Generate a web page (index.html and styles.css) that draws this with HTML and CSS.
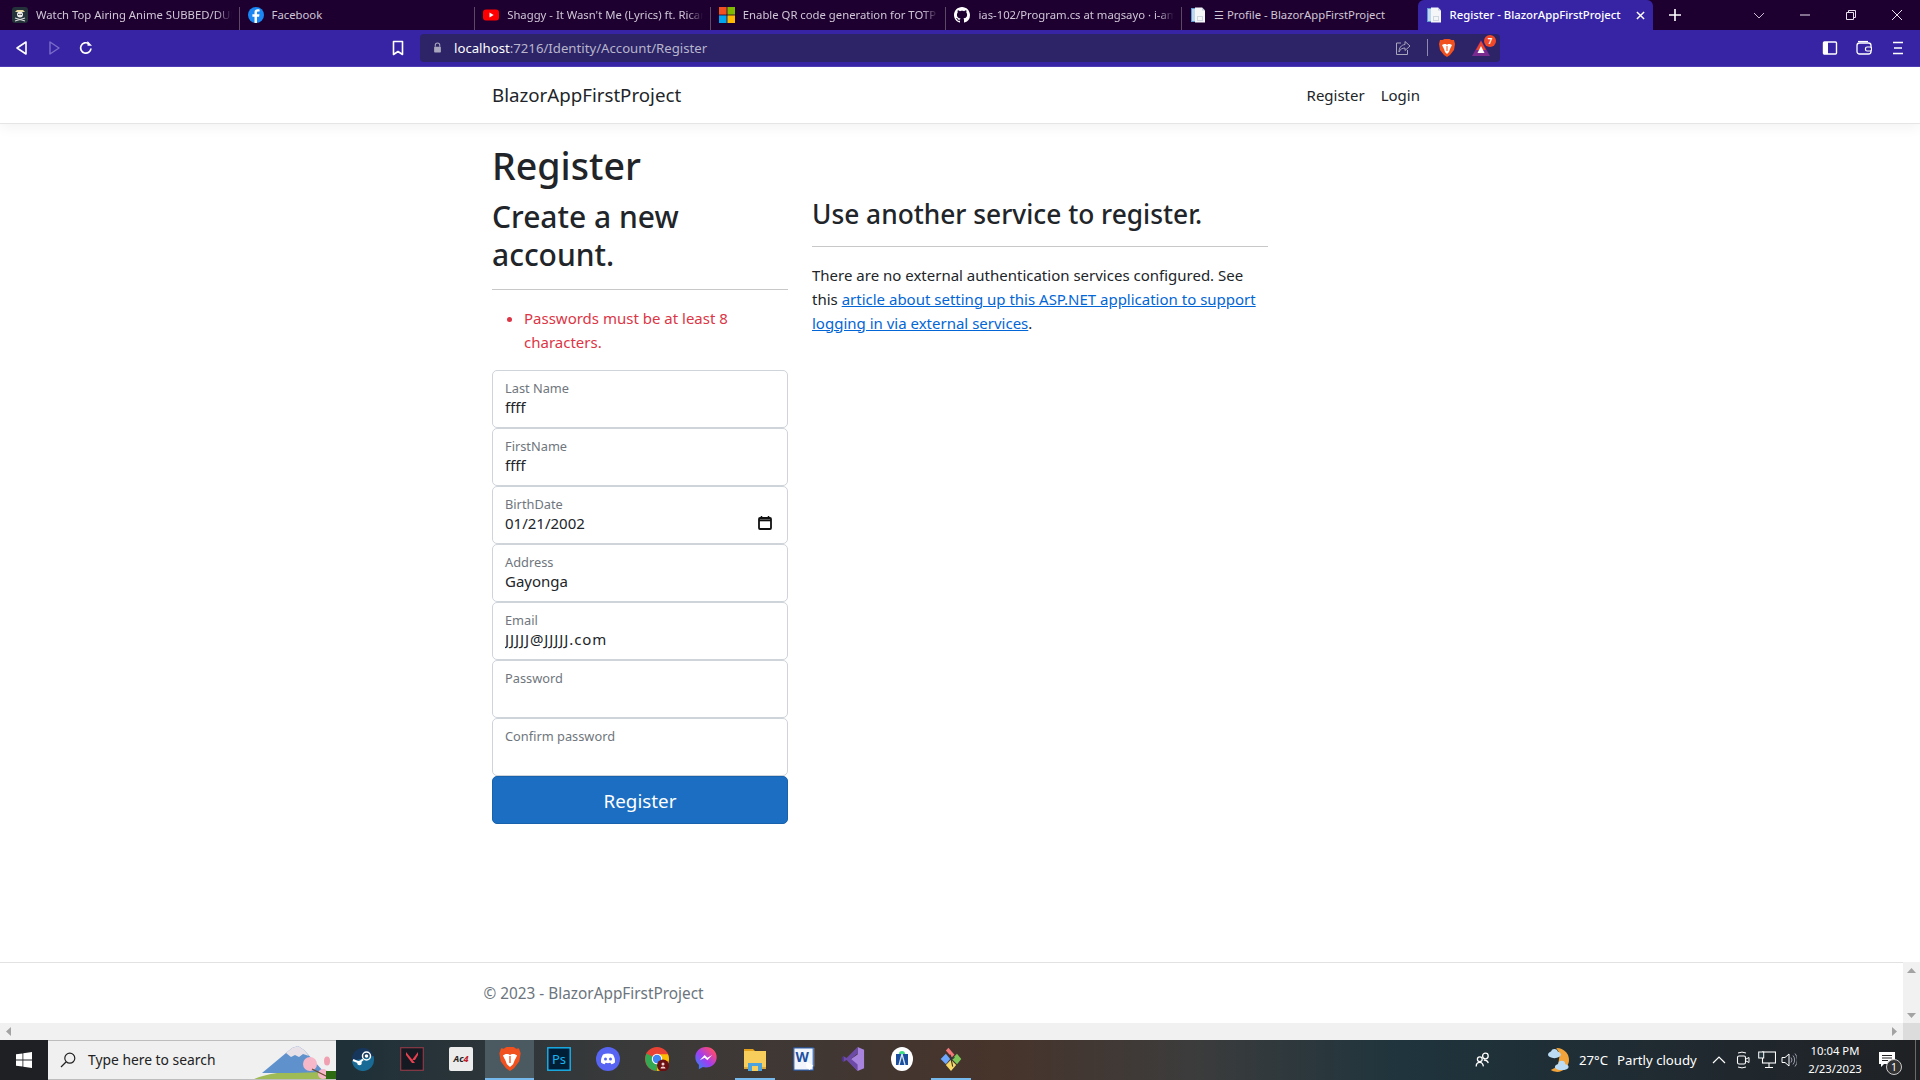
FILE: index.html
```html
<!DOCTYPE html>
<html lang="en">
<head>
<meta charset="utf-8">
<title>Register - BlazorAppFirstProject</title>
<link rel="stylesheet" href="styles.css">
</head>
<body>
<svg class="defs" width="0" height="0" aria-hidden="true">
  <symbol id="doc" viewBox="0 0 16 16">
    <path d="M1 1h6v14H1z" fill="#5f9bd1"/><path d="M2 2h4v12H2z" fill="#bcd8f0"/>
    <path d="M5 0.5h7l3 3v12H5z" fill="#f4f6f8"/><path d="M12 .5v3h3z" fill="#c6d0d8"/>
    <path d="M7 9h6v5H7z" fill="#cfd8e0"/><path d="M8 10h4v3H8z" fill="#f4f6f8"/>
  </symbol>
</svg>

<div class="tabbar">
  <div class="tab">
    <svg class="fav" viewBox="0 0 16 16"><rect width="16" height="16" rx="3" fill="#24323a"/><path d="M3 5l10 0-2-2H5z" fill="#e8d9a0"/><circle cx="8" cy="7.6" r="3" fill="#eee"/><path d="M3 11l10 3M13 11L3 14" stroke="#ddd" stroke-width="1.2"/><circle cx="6.9" cy="7.4" r=".7" fill="#222"/><circle cx="9.1" cy="7.4" r=".7" fill="#222"/></svg>
    <span class="tab-title tab-fade">Watch Top Airing Anime SUBBED/DUB</span>
  </div>
  <div class="tab">
    <svg class="fav" viewBox="0 0 16 16"><circle cx="8" cy="8" r="8" fill="#1b87f3"/><path d="M9 16V9.8h2.1l.4-2.5H9V5.8c0-.8.3-1.2 1.3-1.2h1.3V2.4c-.5-.1-1.2-.2-1.9-.2-2 0-3.2 1.2-3.2 3.3v1.8H4.400v2.500h2.100V16z" fill="#fff"/></svg>
    <span class="tab-title">Facebook</span>
  </div>
  <div class="tab">
    <svg class="fav" viewBox="0 0 16 16"><rect y="2.500" width="16" height="11" rx="3" fill="#f00"/><path d="M6.500 5.500v5L10.700 8z" fill="#fff"/></svg>
    <span class="tab-title tab-fade">Shaggy - It Wasn't Me (Lyrics) ft. Ricar</span>
  </div>
  <div class="tab">
    <svg class="fav" viewBox="0 0 16 16"><path d="M0 0h7.600v7.600H0z" fill="#f25022"/><path d="M8.400 0H16v7.600H8.400z" fill="#7fba00"/><path d="M0 8.400h7.600V16H0z" fill="#00a4ef"/><path d="M8.400 8.400H16V16H8.400z" fill="#ffb900"/></svg>
    <span class="tab-title tab-fade">Enable QR code generation for TOTP a</span>
  </div>
  <div class="tab">
    <svg class="fav" viewBox="0 0 16 16"><path fill="#fff" d="M8 0C3.580 0 0 3.580 0 8c0 3.540 2.290 6.530 5.470 7.590.4.070.55-.17.55-.38 0-.19-.01-.82-.01-1.490-2.010.37-2.530-.49-2.690-.94-.09-.23-.48-.94-.82-1.130-.28-.15-.68-.52-.01-.53.63-.01 1.080.58 1.230.82.720 1.210 1.870.87 2.330.66.070-.52.28-.87.51-1.070-1.780-.2-3.640-.89-3.640-3.950 0-.87.31-1.590.82-2.150-.08-.2-.36-1.020.08-2.120 0 0 .67-.21 2.200.82.64-.18 1.320-.27 2-.27.68 0 1.360.09 2 .27 1.530-1.040 2.200-.82 2.200-.82.44 1.100.16 1.920.08 2.120.51.56.82 1.270.82 2.150 0 3.070-1.870 3.750-3.650 3.950.29.25.54.73.54 1.480 0 1.070-.01 1.930-.01 2.200 0 .21.15.46.55.38A8.013 8.013 0 0016 8c0-4.420-3.580-8-8-8z"/></svg>
    <span class="tab-title tab-fade">ias-102/Program.cs at magsayo · i-am</span>
  </div>
  <div class="tab tab-last">
    <svg class="fav"><use href="#doc"/></svg>
    <span class="tab-title">☰ Profile - BlazorAppFirstProject</span>
  </div>
  <div class="tab tab-active">
    <svg class="fav"><use href="#doc"/></svg>
    <span class="tab-title">Register - BlazorAppFirstProject</span>
    <svg class="tab-close" viewBox="0 0 10 10"><path d="M1 1l8 8M9 1L1 9" stroke="#fff" stroke-width="1.600"/></svg>
  </div>
  <svg class="new-tab" viewBox="0 0 12 12"><path d="M6 0v12M0 6h12" stroke="#fff" stroke-width="1.600"/></svg>
  <div class="win-controls">
    <svg class="win-ico" viewBox="0 0 12 12"><path d="M1 4l5 5 5-5" fill="none" stroke="#c9bdd0" stroke-width="1"/></svg>
    <svg class="win-ico" viewBox="0 0 12 12"><path d="M1 6h10" stroke="#e8e0ec" stroke-width="1"/></svg>
    <svg class="win-ico" viewBox="0 0 12 12"><path d="M1.500 3.500h7v7h-7zM3.500 3.500v-2h7v7h-2" fill="none" stroke="#e8e0ec" stroke-width="1"/></svg>
    <svg class="win-ico" viewBox="0 0 12 12"><path d="M1 1l10 10M11 1L1 11" stroke="#e8e0ec" stroke-width="1"/></svg>
  </div>
</div>

<div class="toolbar">
  <svg class="tool-ico tool-back" viewBox="0 0 16 16"><path d="M12 2v12L3 8z" fill="none" stroke="#fff" stroke-width="1.600" stroke-linejoin="round"/></svg>
  <svg class="tool-ico tool-fwd" viewBox="0 0 16 16"><path d="M4 2v12l9-6z" fill="none" stroke="#7a6cc8" stroke-width="1.400" stroke-linejoin="round"/></svg>
  <svg class="tool-ico tool-reload" viewBox="0 0 16 16"><path d="M13 8.500A5.200 5.200 0 1 1 10.800 3.700" fill="none" stroke="#fff" stroke-width="1.700"/><path d="M9.500 1v4.800h4.500z" fill="#fff"/></svg>
  <svg class="tool-ico tool-mark" viewBox="0 0 16 16"><path d="M3.500 1.500h9v13L8 11.500l-4.500 3z" fill="none" stroke="#fff" stroke-width="1.600" stroke-linejoin="round"/></svg>
  <div class="urlbar">
    <svg class="lock" viewBox="0 0 12 14"><path d="M3 6V4a3 3 0 0 1 6 0v2" fill="none" stroke="#a8a6bd" stroke-width="1.400"/><rect x="1.500" y="6" width="9" height="7.500" rx="1" fill="#a8a6bd"/></svg>
    <span class="url"><b class="url-host">localhost</b>:7216/Identity/Account/Register</span>
    <svg class="share" viewBox="0 0 16 16"><path d="M6 3H1.500v11.500h11V10" fill="none" stroke="#a8a6bd" stroke-width="1"/><path d="M10 1.500L15 6l-5 4.500V8C7 8 5 9.500 4 12c0-4 2-7 6-7.500z" fill="none" stroke="#a8a6bd" stroke-width="1"/></svg>
    <span class="url-sep"></span>
    <svg class="brave" viewBox="0 0 16 18"><path d="M3.500 1L5.500 0h5l2 1L15 1l1 4-1 6-4 5-3 2-3-2-4-5-1-6 1-4z" fill="#f1501f"/><path d="M5 5h2l1 1 1-1h2l2 1-2 4-1 3-2 2-2-2-1-3-2-4z" fill="#fff"/><path d="M8 7v5" stroke="#f1501f" stroke-width="1"/></svg>
    <span class="rewards">
      <svg class="rewards-tri" viewBox="0 0 18 16"><path d="M9 0l9 16H0z" fill="#7b2a8f"/><path d="M9 1l5 9H4z" fill="#e8452c"/><path d="M9 6l3.500 7h-7z" fill="#fff"/></svg>
      <span class="badge">7</span>
    </span>
  </div>
  <svg class="tool-ico tool-side" viewBox="0 0 16 16"><rect x="1.500" y="2" width="13" height="12" rx="1" fill="none" stroke="#fff" stroke-width="1.400"/><rect x="1.500" y="2" width="4.500" height="12" fill="#fff"/></svg>
  <svg class="tool-ico tool-wallet" viewBox="0 0 16 16"><rect x="1" y="3" width="14" height="11" rx="2.500" fill="none" stroke="#fff" stroke-width="1.300"/><path d="M2 1.500h10" stroke="#fff" stroke-width="1.200"/><rect x="9.500" y="7" width="6" height="4" rx="1.500" fill="#3624a5" stroke="#fff" stroke-width="1.200"/></svg>
  <svg class="tool-ico tool-menu" viewBox="0 0 16 16"><path d="M3 2.500h10M4 8h8M3 13.500h10" stroke="#fff" stroke-width="1.500"/></svg>
</div>

<div class="page">
  <header class="navbar">
    <div class="container nav-inner">
      <a class="brand">BlazorAppFirstProject</a>
      <nav class="nav-links"><a>Register</a><a>Login</a></nav>
    </div>
  </header>
  <main class="container main">
    <h1>Register</h1>
    <div class="cols">
      <section class="col-form">
        <h2>Create a new account.</h2>
        <hr>
        <ul class="errors"><li>Passwords must be at least 8 characters.</li></ul>
        <div class="field"><input type="text" value="ffff"><label>Last Name</label></div>
        <div class="field"><input type="text" value="ffff"><label>FirstName</label></div>
        <div class="field"><input type="text" value="01/21/2002"><label>BirthDate</label>
          <svg class="cal" viewBox="0 0 14 14"><path d="M3.500 0v3M10.500 0v3" stroke="#111" stroke-width="1.500"/><rect x="1" y="2" width="12" height="11" rx="1" fill="none" stroke="#111" stroke-width="1.800"/><path d="M1 4.300h12" stroke="#111" stroke-width="2"/></svg>
        </div>
        <div class="field"><input type="text" value="Gayonga"><label>Address</label></div>
        <div class="field"><input class="input-wide" type="text" value="JJJJJ@JJJJJ.com"><label>Email</label></div>
        <div class="field"><input type="password"><label>Password</label></div>
        <div class="field"><input type="password"><label>Confirm password</label></div>
        <button class="submit" type="button">Register</button>
      </section>
      <section class="col-ext">
        <h3>Use another service to register.</h3>
        <hr>
        <p>There are no external authentication services configured. See this <a href="#">article about setting up this ASP.NET application to support logging in via external services</a>.</p>
      </section>
    </div>
  </main>
</div>

<div class="footer-wrap">
  <div class="footer-row">
    <footer class="footer"><div class="footer-inner">© 2023 - <a>BlazorAppFirstProject</a></div></footer>
    <div class="vscroll">
      <svg class="arrow" viewBox="0 0 9 5"><path d="M4.500 0L9 5H0z" fill="#a3a3a3"/></svg>
      <svg class="arrow" viewBox="0 0 9 5"><path d="M4.500 5L0 0h9z" fill="#a3a3a3"/></svg>
    </div>
  </div>
  <div class="hscroll">
    <div class="hscroll-track">
      <svg class="arrow-h" viewBox="0 0 5 9"><path d="M0 4.500L5 0v9z" fill="#a3a3a3"/></svg>
      <svg class="arrow-h" viewBox="0 0 5 9"><path d="M5 4.500L0 0v9z" fill="#a3a3a3"/></svg>
    </div>
    <div class="hscroll-corner"></div>
  </div>
</div>

<div class="taskbar">
  <div class="start">
    <svg class="start-ico" viewBox="0 0 16 16"><path d="M0 2.300l6.500-.9v6.200H0zM7.300 1.300L16 0v7.600H7.300zM0 8.400h6.500v6.200L0 13.700zM7.300 8.400H16V16l-8.700-1.300z" fill="#fff"/></svg>
  </div>
  <div class="search">
    <svg class="search-ico" viewBox="0 0 16 16"><circle cx="9.800" cy="6.200" r="5" fill="none" stroke="#222" stroke-width="1.200"/><path d="M6 10L1 15" stroke="#222" stroke-width="1.300"/></svg>
    <span class="search-text">Type here to search</span>
    <svg class="search-art" viewBox="0 0 82 38"><path d="M0 38C20 30 50 28 82 32v6z" fill="#9fbb55"/><path d="M8 32L38 7l6-2 6 4 20 22-30 1z" fill="#5f92cc"/><path d="M32 12l6-5 6-2 6 4 5 6-6-2-4 3-4-2-4 2z" fill="#e8e2e8"/><circle cx="56" cy="23" r="7" fill="#f6b7c8"/><circle cx="69" cy="33" r="5" fill="#f6b7c8"/><ellipse cx="73" cy="20" rx="3" ry="4.500" fill="#f0a0b0"/><path d="M58 28l16 8" stroke="#6a4a2c" stroke-width="1.200"/><path d="M72 30h10v8H72z" fill="#2e6a12"/></svg>
  </div>
  <div class="apps">
    <span class="app"><svg viewBox="0 0 24 24"><circle cx="12" cy="12" r="11" fill="#16365c"/><path d="M1 14a11 11 0 0 0 22-2c0-1-.2-2-.4-3z" fill="#1a6a96"/><circle cx="15.500" cy="9" r="4" fill="none" stroke="#fff" stroke-width="1.500"/><circle cx="15.500" cy="9" r="1.800" fill="#fff"/><path d="M2 13l6 2.500 4-3" stroke="#fff" stroke-width="2" fill="none"/><circle cx="8.500" cy="16" r="2.300" fill="#fff"/></svg></span>
    <span class="app"><svg viewBox="0 0 24 24"><rect x=".7" y=".7" width="22.600" height="22.600" fill="#151922" stroke="#8a3a48" stroke-width="1.200"/><path d="M6 8l6 8h3L6 5zM18 8l-3 5h-3l6-8z" fill="#e9404f"/></svg></span>
    <span class="app"><svg viewBox="0 0 24 24"><rect width="24" height="24" rx="2" fill="#ececec"/><text class="app-tiny" x="12" y="15" text-anchor="middle">Ac<tspan fill="#c0202a">4</tspan></text></svg></span>
    <span class="app app-active"><svg viewBox="0 0 24 27"><path d="M5 2l3-2h8l3 2 3-.5L24 7l-1.500 9-6 8-4.500 3-4.500-3-6-8L0 7l2-5.500z" fill="#f1501f"/><path d="M7 8h3l2 1 2-1h3l3 1.500-3 6-1.500 4-3.500 3-3.500-3L7 15.500l-3-6z" fill="#fff"/><path d="M12 10v8" stroke="#f1501f" stroke-width="1.500"/></svg></span>
    <span class="app"><svg viewBox="0 0 24 24"><rect x=".8" y=".8" width="22.400" height="22.400" fill="#001e36" stroke="#19b4f0" stroke-width="1.400"/><text class="app-ps" x="12" y="17" text-anchor="middle">Ps</text></svg></span>
    <span class="app"><svg viewBox="0 0 24 24"><circle cx="12" cy="12" r="12" fill="#5865f2"/><path d="M7 7.500c3-1.300 7-1.300 10 0 1.500 2.500 2.200 5 2 8-1.300 1-2.500 1.500-3.700 1.800l-.9-1.500c-2.300.6-2.500.6-4.800 0l-.9 1.500C7.500 17 6.300 16.500 5 15.500c-.2-3 .5-5.500 2-8z" fill="#fff"/><circle cx="9.500" cy="12" r="1.500" fill="#5865f2"/><circle cx="14.500" cy="12" r="1.500" fill="#5865f2"/></svg></span>
    <span class="app"><svg viewBox="0 0 24 24"><circle cx="12" cy="12" r="12" fill="#ea4335"/><path d="M12 12L1.600 6.500A12 12 0 0 0 12 24z" fill="#34a853"/><path d="M12 12V24A12 12 0 0 0 23 7.200H12z" fill="#fbbc05"/><circle cx="12" cy="12" r="5.200" fill="#fff"/><circle cx="12" cy="12" r="4.200" fill="#4285f4"/><circle cx="18" cy="18.500" r="6" fill="#6b0f12"/><circle cx="18" cy="17" r="1.500" fill="#f0d0d0"/><path d="M15.500 21.500a2.500 2 0 0 1 5 0z" fill="#f0d0d0"/></svg></span>
    <span class="app"><svg viewBox="0 0 24 27"><defs><linearGradient id="msg" x1="0" y1="1" x2="1" y2="0"><stop offset="0" stop-color="#1f8ff5"/><stop offset=".45" stop-color="#a03df0"/><stop offset=".8" stop-color="#f5477e"/><stop offset="1" stop-color="#fb7a4e"/></linearGradient></defs><path d="M12 0C5 0 0 5 0 11.500c0 3.500 1.500 6.500 4 8.500v5l4.500-2.500c1 .3 2.300.5 3.500.5 7 0 12-5 12-11.500S19 0 12 0z" fill="url(#msg)"/><path d="M5 15l5.500-6 3 3 5.500-3-5.500 6-3-3z" fill="#fff"/></svg></span>
    <span class="app app-open"><svg viewBox="0 0 24 24"><path d="M1 2h9l2 2h-11z" fill="#e4a21c"/><path d="M1 4h22v18H1z" fill="#f7ce5c"/><path d="M5 16h14v8H5z" fill="#4aa3df"/><path d="M9 19h6v5H9z" fill="#f7ce5c"/><path d="M1 20h4v2H1zM19 20h4v2h-4z" fill="#d9a93c"/></svg></span>
    <span class="app"><svg viewBox="0 0 24 26"><path d="M1 1h22v20H16l-3 3-3-3H1z" fill="#fff"/><rect x="1" y="1" width="21" height="24" fill="#f2f5fb" stroke="#2456a8" stroke-width="1.200"/><text class="app-word" x="10" y="16" text-anchor="middle">W</text><path d="M15 16l7 4-4 5-4-4z" fill="#fff"/></svg></span>
    <span class="app"><svg viewBox="0 0 24 26"><path d="M17 0l7 3v20l-7 3-10-11 10-7z" fill="#a884de"/><path d="M17 0L5 12l-3-2-2 1v4l2 1 3-2 12 12v-7l-7-6 7-6z" fill="#6d49a8"/><path d="M0 11l2-1v6l-2-1z" fill="#4d3385"/></svg></span>
    <span class="app"><svg viewBox="0 0 24 24"><ellipse cx="12" cy="12" rx="11" ry="12" fill="#fff"/><rect x="6" y="7" width="12" height="11" fill="#1b4e9c"/><path d="M9 7a3 3 0 0 1 6 0z" fill="#3ddc84"/><path d="M12 7L9 18M12 7l3 11" stroke="#d7e6f8" stroke-width="1.300"/></svg></span>
    <span class="app app-open"><svg viewBox="0 0 24 28"><path d="M6 4l3-3 7 8-3 3z" fill="#f2787a"/><path d="M0 14l6-6 5 6-5 6z" fill="#6ea7ff"/><path d="M13 14l6-6 5 6-5 6z" fill="#7ec85a"/><path d="M6 21l6-6 6 6-6 7z" fill="#f9d86a"/><path d="M11 9l3 14M16 12l-4 3" stroke="#333" stroke-width="1.300"/></svg></span>
  </div>
  <div class="tray">
    <svg class="people" viewBox="0 0 20 20"><circle cx="13" cy="5" r="3.500" fill="none" stroke="#fff" stroke-width="1.600"/><circle cx="6" cy="9" r="3" fill="none" stroke="#fff" stroke-width="1.600"/><path d="M1.500 18c0-3 2-5 4.500-5s4 2 4.500 5M11 10c3 0 5 1.500 5.500 4" fill="none" stroke="#fff" stroke-width="1.600"/></svg>
    <svg class="weather" viewBox="0 0 24 26"><path d="M9 0a13 13 0 1 1-6 24A13 13 0 0 0 12 12 13 13 0 0 0 9 0z" fill="#f2a33a"/><ellipse cx="7" cy="7" rx="7" ry="4" fill="#bcdcf5"/><circle cx="7" cy="4.500" r="3.500" fill="#bcdcf5"/><ellipse cx="15" cy="20.500" rx="7.500" ry="3.500" fill="#bcdcf5"/><circle cx="15" cy="17.500" r="3.800" fill="#bcdcf5"/></svg>
    <span class="temp">27°C</span>
    <span class="cond">Partly cloudy</span>
    <svg class="caret" viewBox="0 0 14 8"><path d="M1 7l6-6 6 6" fill="none" stroke="#fff" stroke-width="1.200"/></svg>
    <svg class="meet" viewBox="0 0 14 20"><path d="M2 3a6 3 0 0 1 8 0M2 17a6 3 0 0 0 8 0" fill="none" stroke="#fff" stroke-width="1"/><rect x="1.500" y="6" width="8" height="8" rx="1.500" fill="none" stroke="#fff" stroke-width="1.100"/><path d="M10 9l3-1.500v5L10 11" fill="none" stroke="#fff" stroke-width="1"/></svg>
    <svg class="net" viewBox="0 0 18 18"><rect x="4.500" y="1" width="13" height="11" fill="none" stroke="#fff" stroke-width="1.100"/><rect x=".7" y="1" width="5" height="6" fill="#22343c" stroke="#fff" stroke-width="1"/><path d="M11 12v4M7 16.500h8" stroke="#fff" stroke-width="1.100"/></svg>
    <svg class="vol" viewBox="0 0 16 16"><path d="M1 5.500h3L8 2v12L4 10.500H1z" fill="none" stroke="#fff" stroke-width="1"/><path d="M10 5.500a4 4 0 0 1 0 5M12 3.500a7 7 0 0 1 0 9M14 1.500a10 10 0 0 1 0 13" fill="none" stroke="#aab" stroke-width=".9"/></svg>
    <div class="clock"><span>10:04 PM</span><span>2/23/2023</span></div>
    <span class="notif">
      <svg class="notif-ico" viewBox="0 0 16 16"><path d="M0 0h16v12H5l-3 3v-3H0z" fill="#fff"/><path d="M3 3.500h10M3 6h10M3 8.500h6" stroke="#222" stroke-width="1"/></svg>
      <span class="notif-count">1</span>
    </span>
    <span class="show-desktop"></span>
  </div>
</div>
</body>
</html>
```

FILE: styles.css
```css
* { box-sizing: border-box; }
html, body { height: 100%; }
body {
  margin: 0;
  height: 100vh;
  overflow: hidden;
  display: flex;
  flex-direction: column;
  font-family: "Noto Sans", "Open Sans", sans-serif;
  font-size: 15px;
  line-height: 24px;
  color: #212529;
  background: #fff;
}
.defs { position: absolute; }

/* browser tab strip */
.tabbar {
  height: 30px;
  flex: none;
  display: flex;
  align-items: stretch;
  padding-left: 4px;
  background: #1e0030;
  color: #cfc6d6;
  font-size: 11.3px;
  line-height: 16px;
}
.tab {
  width: 235.6px;
  height: 30px;
  flex: none;
  display: flex;
  align-items: center;
  gap: 8px;
  padding: 0 8px;
  position: relative;
  white-space: nowrap;
}
.tab::after {
  content: "";
  position: absolute;
  right: 0;
  top: 7px;
  bottom: 0;
  width: 1px;
  background: #5a4a63;
}
.tab-last::after, .tab-active::after { display: none; }
.fav { width: 16px; height: 16px; flex: none; }
.tab-title { flex: 1; overflow: hidden; min-width: 0; }
.tab-fade {
  -webkit-mask-image: linear-gradient(90deg, #000 92%, transparent 100%);
  mask-image: linear-gradient(90deg, #000 92%, transparent 100%);
}
.tab-active {
  background: #3624a5;
  color: #fff;
  border-radius: 6px 6px 0 0;
  font-weight: 500;
}
.tab-close { width: 9px; height: 9px; flex: none; }
.new-tab { width: 12px; height: 12px; margin: 9px 0 0 16px; flex: none; }
.win-controls {
  margin-left: auto;
  display: flex;
  align-items: center;
  gap: 34px;
  padding-right: 17px;
}
.win-ico { width: 12px; height: 12px; }

/* browser toolbar */
.toolbar {
  height: 37px;
  flex: none;
  display: flex;
  align-items: center;
  padding-bottom: 1px;
  background: #3624a5;
  border-bottom: 1px solid #4d3cb4;
}
.tool-ico { width: 16px; height: 16px; flex: none; }
.tool-back { margin-left: 14px; }
.tool-fwd { margin-left: 16px; }
.tool-reload { margin-left: 16px; }
.tool-mark { margin-left: 296px; }
.tool-side { margin-left: 322px; }
.tool-wallet { margin-left: 18px; }
.tool-menu { margin-left: 18px; }
.urlbar {
  width: 1080px;
  height: 28px;
  margin-left: 14px;
  display: flex;
  align-items: center;
  padding: 0 4px 0 13px;
  background: #2c2467;
  border-radius: 4px;
  color: #b8b5cc;
  font-size: 13.2px;
}
.lock { width: 9px; height: 11px; flex: none; }
.url { margin-left: 12px; flex: 1; }
.url-host { font-weight: 400; color: #fff; }
.share { width: 16px; height: 16px; flex: none; }
.url-sep { width: 1px; height: 17px; background: #8f8ab0; margin: 0 11px 0 16px; flex: none; }
.brave { width: 16px; height: 18px; flex: none; }
.rewards { position: relative; width: 18px; height: 16px; margin: 0 6px 0 17px; flex: none; }
.rewards-tri { width: 18px; height: 16px; display: block; }
.badge {
  position: absolute;
  top: -5px;
  right: -6px;
  width: 12px;
  height: 12px;
  border-radius: 50%;
  background: #f0492a;
  color: #fff;
  font-size: 8px;
  line-height: 12px;
  text-align: center;
  font-weight: 700;
}

/* web page */
.page { flex: 1; min-height: 0; display: flex; flex-direction: column; overflow: hidden; }
.container { width: 960px; margin: 0 auto; padding: 0 12px; }
.navbar {
  height: 57px;
  flex: none;
  border-bottom: 1px solid #e5e5e5;
  box-shadow: 0 4px 12px rgba(0, 0, 0, .05);
}
.nav-inner { height: 100%; display: flex; align-items: center; justify-content: space-between; }
.brand { font-size: 18.7px; }
.nav-links { display: flex; gap: 16px; padding-right: 8px; }
.main { padding-top: 18px; }
h1 { margin: 0 0 8px; font-size: 37.6px; line-height: 48px; font-weight: 500; }
.cols { display: flex; gap: 24px; }
.col-form { width: 296px; flex: none; }
.col-ext { width: 456px; flex: none; }
h2 { margin: 0 0 8px; font-size: 30px; line-height: 38.4px; font-weight: 500; }
h3 { margin: 0 0 8px; font-size: 26.3px; line-height: 33.6px; font-weight: 500; }
hr { margin: 14px 0 16px; border: 0; border-top: 1px solid #c8c8c8; }
.errors {
  margin: 0 0 16px;
  padding-left: 32px;
  color: #dc3545;
}
.field { position: relative; height: 58px; }
.field input {
  display: block;
  width: 100%;
  height: 58px;
  padding: 25px 12px 9px;
  border: 1px solid #ced4da;
  border-radius: 5px;
  font: inherit;
  color: #212529;
  background: #fff;
}
.field .input-wide { letter-spacing: .9px; }
.field label {
  position: absolute;
  left: 13px;
  top: 8px;
  font-size: 12.8px;
  line-height: 20px;
  color: #6f767d;
}
.cal { position: absolute; right: 16px; top: 30px; width: 14px; height: 14px; }
.submit {
  display: block;
  width: 100%;
  height: 48px;
  padding: 2px 0 0;
  border: 1px solid #1861ac;
  border-radius: 5px;
  background: #1b6ec2;
  color: #fff;
  font: inherit;
  font-size: 18.8px;
}
.col-ext p { margin: 0; }
.col-ext a { color: #0366d6; }

/* footer with its scrollbars */
.footer-wrap { height: 78px; flex: none; display: flex; flex-direction: column; }
.footer-row { flex: 1; display: flex; min-height: 0; }
.footer {
  flex: 1;
  border-top: 1px solid #e2e2e2;
  color: #6c757d;
  font-size: 15.35px;
  display: flex;
  align-items: center;
}
.footer-inner { width: 960px; margin: 0 auto; padding: 0 12px 0; }
.vscroll {
  width: 17px;
  flex: none;
  display: flex;
  flex-direction: column;
  justify-content: space-between;
  align-items: center;
  padding: 6px 0 5px;
  background: #f1f1f1;
}
.arrow { width: 9px; height: 5px; }
.hscroll { height: 17px; flex: none; display: flex; }
.hscroll-track {
  flex: 1;
  display: flex;
  align-items: center;
  justify-content: space-between;
  padding: 0 6px;
  background: #f1f1f1;
}
.hscroll-corner { width: 17px; background: #dcdcdc; }
.arrow-h { width: 5px; height: 9px; }

/* windows taskbar */
.taskbar {
  height: 40px;
  flex: none;
  display: flex;
  align-items: stretch;
  background: linear-gradient(90deg, #1f3038 0, #1f3038 18%, #3a3a3a 33%, #47342b 52%, #3c3c3c 62%, #1f343d 73%, #20282e 90%, #1f2124 100%);
  color: #fff;
}
.start { width: 48px; flex: none; display: flex; align-items: center; justify-content: center; background: #1f2023; }
.start-ico { width: 16px; height: 16px; }
.search {
  width: 288px;
  flex: none;
  display: flex;
  align-items: center;
  position: relative;
  padding-left: 12px;
  background: #f0f0f0;
  border-top: 1px solid #bdbdbd;
  border-bottom: 1px solid #bdbdbd;
  color: #222;
  font-size: 13.85px;
}
.search-ico { width: 16px; height: 16px; }
.search-text { margin-left: 12px; }
.search-art { position: absolute; right: 0; bottom: 0; width: 82px; height: 38px; }
.apps { display: flex; flex: none; margin-left: 2px; }
.app {
  width: 49px;
  flex: none;
  display: flex;
  align-items: center;
  justify-content: center;
  padding-bottom: 3px;
  position: relative;
}
.app svg { width: 24px; height: 24px; }
.app-active { background: #4a5a60; box-shadow: inset 0 -2px 0 #76b9ed; }
.app-open::after {
  content: "";
  position: absolute;
  left: 5px;
  right: 4px;
  bottom: 0;
  height: 2px;
  background: #76b9ed;
}
.app-tiny { font-size: 9px; font-weight: 700; font-style: italic; fill: #222; }
.app-ps { font-size: 13px; fill: #19b4f0; }
.app-word { font-size: 15px; font-weight: 700; fill: #1d50a2; }
.tray { flex: 1; display: flex; align-items: center; position: relative; font-size: 13.2px; padding-left: 500px; }
.people { width: 16px; height: 16px; flex: none; }
.weather { width: 22px; height: 24px; flex: none; margin-left: 57px; }
.temp { margin-left: 9px; width: 38px; flex: none; white-space: nowrap; }
.cond { width: 95px; flex: none; white-space: nowrap; }
.caret { width: 14px; height: 8px; flex: none; }
.meet { width: 14px; height: 20px; flex: none; margin-left: 10px; }
.net { width: 18px; height: 18px; flex: none; margin-left: 8px; }
.vol { width: 16px; height: 16px; flex: none; margin-left: 5px; }
.clock {
  width: 66px;
  margin-left: 5px;
  padding-bottom: 2px;
  display: flex;
  flex-direction: column;
  align-items: center;
  gap: 3px;
  font-size: 11.3px;
  line-height: 15px;
}
.notif { position: relative; width: 16px; height: 16px; margin-left: 11px; flex: none; }
.notif-ico { width: 16px; height: 16px; display: block; }
.notif-count {
  position: absolute;
  left: 7px;
  top: 7px;
  width: 16px;
  height: 16px;
  border: 1px solid #ccc;
  border-radius: 50%;
  background: #333;
  font-size: 10.5px;
  line-height: 14px;
  text-align: center;
}
.show-desktop { position: absolute; right: 4px; top: 0; bottom: 0; width: 1px; background: #6a6a6a; }
```
